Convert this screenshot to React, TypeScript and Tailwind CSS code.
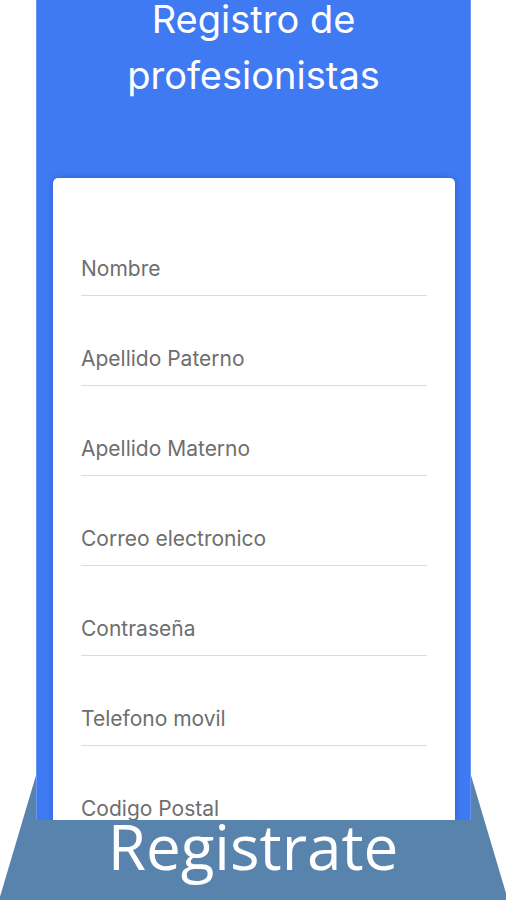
import React from "react";

const fields = [
  "Nombre",
  "Apellido Paterno",
  "Apellido Materno",
  "Correo electronico",
  "Contraseña",
  "Telefono movil",
  "Codigo Postal",
];

export default function App() {
  return (
    <div className="relative w-[506px] h-[900px] overflow-hidden bg-white">
      {/* trapezoid banner behind the phone panel */}
      <div
        className="absolute left-0 top-[772px] w-[506px] h-[128px] bg-[#5883ad] z-0 [clip-path:polygon(37px_0,470px_0,508px_128px,-1px_128px)]"
        aria-hidden
      />
      {/* phone panel */}
      <div className="relative z-10 ml-[36px] w-[435px] h-[820px] overflow-hidden bg-[#407af3] border-x border-[#6b95f5] flex flex-col">
        <h1
          className="-mt-[9px] text-center text-white text-[38px] leading-[56px] font-normal"
          style={{ fontFamily: "Inter, 'Liberation Sans', sans-serif" }}
        >
          Registro de
          <br />
          profesionistas
        </h1>
        <div className="mt-[75px] ml-[16px] w-[402px] flex-1 bg-white rounded-t-[5px] shadow-[0_0_6px_rgba(20,60,160,0.45)] px-[28px] pt-[28px]">
          {fields.map((f) => (
            <div
              key={f}
              className="pt-[49px] pb-[12px] border-b-[1.5px] border-[#dcdcdc]"
            >
              <div
                className="text-[21px] leading-[28px] text-[#6e6e6e]"
                style={{ fontFamily: "Inter, 'Liberation Sans', sans-serif" }}
              >
                {f}
              </div>
            </div>
          ))}
        </div>
      </div>
      {/* banner label */}
      <div className="relative z-20 h-[80px] flex justify-center">
        <span
          className="-mt-[5px] text-white text-[62px] leading-[62px]"
          style={{ fontFamily: "'Open Sans', 'Liberation Sans', sans-serif" }}
        >
          Registrate
        </span>
      </div>
    </div>
  );
}
